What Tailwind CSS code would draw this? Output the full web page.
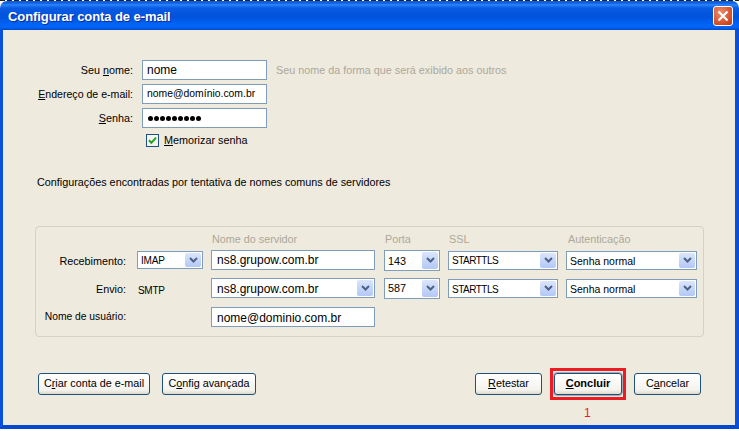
<!DOCTYPE html>
<html lang="pt-BR">
<head>
<meta charset="UTF-8">
<title>Configurar conta de e-mail</title>
<script src="https://cdn.jsdelivr.net/npm/@tailwindcss/browser@4"></script>
</head>
<body class="bg-white">
<div class="w-[739px] h-[431px] overflow-hidden font-['Liberation_Sans',sans-serif] text-[10.8px] leading-none text-black whitespace-nowrap">
  <!-- rest of the window behind the dialog -->
  <div class="h-[1px] bg-[repeating-linear-gradient(90deg,#222_0_5px,#fff_5px_7px)]"></div>

  <!-- title bar -->
  <div class="h-[29px] rounded-t-[7px] bg-[linear-gradient(180deg,#0a5fe0_0%,#0a60e8_7%,#2c84f8_13%,#0a5ce4_24%,#0052dc_55%,#0062f4_78%,#0066f8_90%,#0048cc_100%)] flex items-center justify-between pl-[8px] pr-[6px]">
    <span class="mt-[2px] font-bold text-[13px] tracking-[-0.08px] text-white [text-shadow:1px_1px_0_#0a2f98]">Configurar conta de e-mail</span>
    <div class="w-[20px] h-[20px] mb-[-1px] rounded-[3px] border border-white bg-[radial-gradient(circle_at_35%_30%,#ec8a6c,#d5502a_65%,#b73a12)] flex items-center justify-center">
      <svg width="12" height="12" viewBox="0 0 12 12"><path d="M1.500 1.500 10.500 10.500M10.500 1.500 1.500 10.500" stroke="#fff" stroke-width="2.2" fill="none"/></svg>
    </div>
  </div>

  <!-- dialog body -->
  <div class="h-[399px] bg-[#eeeade] border-l-[3px] border-r-[4px] border-b-[4px] border-[#0a4fdc] border-b-[#0648d0] pl-[32px] pr-[31px] flex flex-col">

    <!-- account fields -->
    <div class="mt-[30px] flex flex-col gap-[4px]">
      <div class="flex items-center h-[20px]">
        <label class="w-[98px] text-right">Seu <u>n</u>ome:</label>
        <div class="ml-[9px] w-[125px] h-[20px] border border-[#7f9db9] bg-white flex items-center pl-[4px] text-[12px]">nome</div>
        <span class="ml-[9px] text-[#aca899]">Seu nome da forma que será exibido aos outros</span>
      </div>
      <div class="flex items-center h-[20px]">
        <label class="w-[98px] text-right text-[10.6px]"><u>E</u>ndereço de e-mail:</label>
        <div class="ml-[9px] w-[125px] h-[20px] border border-[#7f9db9] bg-white flex items-center pl-[4px] text-[10.4px]">nome@domínio.com.br</div>
      </div>
      <div class="flex items-center h-[20px]">
        <label class="w-[98px] text-right"><u>S</u>enha:</label>
        <div class="ml-[9px] w-[125px] h-[20px] border border-[#7f9db9] bg-white flex items-center pl-[5px] gap-[1px]">
          <i class="w-[5px] h-[5px] rounded-full bg-black"></i><i class="w-[5px] h-[5px] rounded-full bg-black"></i><i class="w-[5px] h-[5px] rounded-full bg-black"></i><i class="w-[5px] h-[5px] rounded-full bg-black"></i><i class="w-[5px] h-[5px] rounded-full bg-black"></i><i class="w-[5px] h-[5px] rounded-full bg-black"></i><i class="w-[5px] h-[5px] rounded-full bg-black"></i><i class="w-[5px] h-[5px] rounded-full bg-black"></i><i class="w-[5px] h-[5px] rounded-full bg-black"></i>
        </div>
      </div>
      <div class="flex items-center h-[13px] mt-[2px] ml-[111px] gap-[5px]">
        <div class="w-[13px] h-[13px] border border-[#1c5180] bg-[#f4f3ee] flex items-center justify-center">
          <svg width="9" height="9" viewBox="0 0 9 9"><path d="M1 4.200 3.400 6.800 8 1.600" stroke="#21a121" stroke-width="2" fill="none"/></svg>
        </div>
        <span><u>M</u>emorizar senha</span>
      </div>
    </div>

    <p class="mt-[30px] ml-[2px] text-[10.8px]">Configurações encontradas por tentativa de nomes comuns de servidores</p>

    <!-- server settings -->
    <div class="mt-[38px] w-[669px] h-[111px] border border-[#d6d2c2] rounded-[4px] flex flex-col">
      <div class="flex items-center h-[23px] pt-[2px] text-[#aca899]">
        <span class="ml-[176px] w-[173px]">Nome do servidor</span>
        <span class="w-[64px]">Porta</span>
        <span class="w-[119px]">SSL</span>
        <span>Autenticação</span>
      </div>

      <div class="flex items-center h-[21px]">
        <label class="w-[90px] text-right mt-[2px]">Recebimento:</label>
        <div class="ml-[11px] w-[66px] h-[18px] border border-[#7f9db9] bg-white flex items-center justify-between pl-[3px] pr-[1px]"><span class="mt-[2px] text-[10px] tracking-[-0.2px]">IMAP</span>
          <span class="w-[16px] h-[14px] rounded-[2px] bg-[linear-gradient(180deg,#dbe5fb,#b3c8f6)] flex items-center justify-center"><svg width="9" height="6" viewBox="0 0 9 6"><path d="M1 1 4.500 4.500 8 1" stroke="#4d6185" stroke-width="2" fill="none"/></svg></span>
        </div>
        <div class="ml-[8px] w-[164px] h-[20px] border border-[#7f9db9] bg-white flex items-center pl-[5px] text-[12px]">ns8.grupow.com.br</div>
        <div class="ml-[9px] w-[56px] h-[21px] border border-[#7f9db9] bg-white flex items-center justify-between pl-[3px] pr-[1px]"><span class="mt-[2px]">143</span>
          <span class="w-[16px] h-[17px] rounded-[2px] bg-[linear-gradient(180deg,#dbe5fb,#b3c8f6)] flex items-center justify-center"><svg width="9" height="6" viewBox="0 0 9 6"><path d="M1 1 4.500 4.500 8 1" stroke="#4d6185" stroke-width="2" fill="none"/></svg></span>
        </div>
        <div class="ml-[8px] w-[110px] h-[19px] border border-[#7f9db9] bg-white flex items-center justify-between pl-[3px] pr-[1px]"><span class="mt-[2px] text-[10px] tracking-[-0.5px]">STARTTLS</span>
          <span class="w-[16px] h-[15px] rounded-[2px] bg-[linear-gradient(180deg,#dbe5fb,#b3c8f6)] flex items-center justify-center"><svg width="9" height="6" viewBox="0 0 9 6"><path d="M1 1 4.500 4.500 8 1" stroke="#4d6185" stroke-width="2" fill="none"/></svg></span>
        </div>
        <div class="ml-[8px] w-[131px] h-[19px] border border-[#7f9db9] bg-white flex items-center justify-between pl-[3px] pr-[1px]"><span class="mt-[2px] text-[10.5px]">Senha normal</span>
          <span class="w-[16px] h-[15px] rounded-[2px] bg-[linear-gradient(180deg,#dbe5fb,#b3c8f6)] flex items-center justify-center"><svg width="9" height="6" viewBox="0 0 9 6"><path d="M1 1 4.500 4.500 8 1" stroke="#4d6185" stroke-width="2" fill="none"/></svg></span>
        </div>
      </div>

      <div class="flex items-center h-[21px] mt-[7px]">
        <label class="w-[90px] text-right mt-[2px]">Envio:</label>
        <span class="ml-[11px] w-[66px] pl-[1px] mt-[5px] text-[10px] tracking-[-0.3px]">SMTP</span>
        <div class="ml-[8px] w-[164px] h-[20px] border border-[#7f9db9] bg-white flex items-center justify-between pl-[5px] pr-[1px] text-[12px]"><span class="mt-[2px]">ns8.grupow.com.br</span>
          <span class="w-[16px] h-[16px] rounded-[2px] bg-[linear-gradient(180deg,#dbe5fb,#b3c8f6)] flex items-center justify-center"><svg width="9" height="6" viewBox="0 0 9 6"><path d="M1 1 4.500 4.500 8 1" stroke="#4d6185" stroke-width="2" fill="none"/></svg></span>
        </div>
        <div class="ml-[9px] w-[56px] h-[21px] border border-[#7f9db9] bg-white flex items-center justify-between pl-[3px] pr-[1px]">587
          <span class="w-[16px] h-[17px] rounded-[2px] bg-[linear-gradient(180deg,#dbe5fb,#b3c8f6)] flex items-center justify-center"><svg width="9" height="6" viewBox="0 0 9 6"><path d="M1 1 4.500 4.500 8 1" stroke="#4d6185" stroke-width="2" fill="none"/></svg></span>
        </div>
        <div class="ml-[8px] w-[110px] h-[19px] border border-[#7f9db9] bg-white flex items-center justify-between pl-[3px] pr-[1px]"><span class="mt-[4px] text-[10px] tracking-[-0.5px]">STARTTLS</span>
          <span class="w-[16px] h-[15px] rounded-[2px] bg-[linear-gradient(180deg,#dbe5fb,#b3c8f6)] flex items-center justify-center"><svg width="9" height="6" viewBox="0 0 9 6"><path d="M1 1 4.500 4.500 8 1" stroke="#4d6185" stroke-width="2" fill="none"/></svg></span>
        </div>
        <div class="ml-[8px] w-[131px] h-[19px] border border-[#7f9db9] bg-white flex items-center justify-between pl-[3px] pr-[1px]"><span class="mt-[2px] text-[10.5px]">Senha normal</span>
          <span class="w-[16px] h-[15px] rounded-[2px] bg-[linear-gradient(180deg,#dbe5fb,#b3c8f6)] flex items-center justify-center"><svg width="9" height="6" viewBox="0 0 9 6"><path d="M1 1 4.500 4.500 8 1" stroke="#4d6185" stroke-width="2" fill="none"/></svg></span>
        </div>
      </div>

      <div class="flex items-center h-[20px] mt-[8px]">
        <label class="w-[90px] text-right text-[10.3px] mt-[1px]">Nome de usuário:</label>
        <div class="ml-[85px] w-[164px] h-[20px] border border-[#7f9db9] bg-white flex items-center pl-[5px] text-[12px]"><span class="mt-[2px]">nome@dominio.com.br</span></div>
      </div>
    </div>

    <!-- action buttons -->
    <div class="mt-[36px] ml-[3px] flex items-center h-[22px]">
      <button class="w-[112px] h-[22px] rounded-[3px] border border-[#1c5180] bg-[linear-gradient(180deg,#fff,#f4f3ee_80%,#dcd8c8)]">C<u>r</u>iar conta de e-mail</button>
      <button class="ml-[12px] w-[94px] h-[22px] rounded-[3px] border border-[#1c5180] bg-[linear-gradient(180deg,#fff,#f4f3ee_80%,#dcd8c8)]">C<u>o</u>nfig avançada</button>
      <button class="ml-auto w-[67px] h-[22px] rounded-[3px] border border-[#1c5180] bg-[linear-gradient(180deg,#fff,#f4f3ee_80%,#dcd8c8)]"><u>R</u>etestar</button>
      <div class="relative ml-[8px] w-[76px] h-[32px] border-[3px] border-[#ed1c24] flex items-center justify-center">
        <button class="w-[68px] h-[22px] rounded-[3px] border border-[#1c5180] outline outline-[1px] outline-[#1c5180]/40 bg-[linear-gradient(180deg,#fff,#f4f3ee_80%,#dcd8c8)] font-bold text-[11px]"><u>C</u>oncluir</button>
        <span class="absolute left-[31px] top-[36px] text-[12px] text-[#ed1c24]">1</span>
      </div>
      <button class="ml-[8px] w-[67px] h-[22px] rounded-[3px] border border-[#1c5180] bg-[linear-gradient(180deg,#fff,#f4f3ee_80%,#dcd8c8)] mr-[3px]">C<u>a</u>ncelar</button>
    </div>
  </div>
</div>
</body>
</html>
